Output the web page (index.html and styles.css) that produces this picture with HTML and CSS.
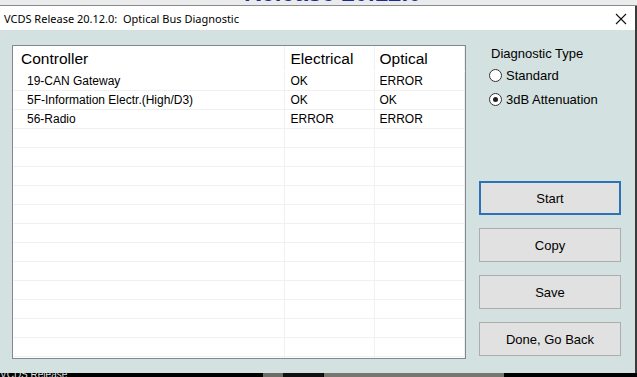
FILE: index.html
```html
<html>
  <head>
    <link rel="stylesheet" href="styles.css">
  </head>
  <body>
    <div class="backdrop-top">
      <div class="backdrop-title">Release 20.12.0</div>
    </div>

    <div class="screen">
      <div class="dialog">
        <div class="titlebar">
          <div class="title">VCDS Release 20.12.0:&nbsp; Optical Bus Diagnostic</div>
          <svg class="close" width="12" height="12" viewBox="0 0 12 12">
            <path d="M1 1 L11 11 M11 1 L1 11" stroke="#111" stroke-width="1.1" fill="none"/>
          </svg>
        </div>

        <div class="content">
          <div class="listbox">
            <table class="grid">
              <colgroup>
                <col class="w1"><col class="w2"><col class="w3"><col>
              </colgroup>
              <tr class="head">
                <td class="c1">Controller</td>
                <td class="c2">Electrical</td>
                <td class="c3">Optical</td>
                <td class="c4"></td>
              </tr>
              <tr><td class="c1">19-CAN Gateway</td><td class="c2">OK</td><td class="c3">ERROR</td><td class="c4"></td></tr>
              <tr><td class="c1">5F-Information Electr.(High/D3)</td><td class="c2">OK</td><td class="c3">OK</td><td class="c4"></td></tr>
              <tr><td class="c1">56-Radio</td><td class="c2">ERROR</td><td class="c3">ERROR</td><td class="c4"></td></tr>
              <tr><td class="c1"></td><td class="c2"></td><td class="c3"></td><td class="c4"></td></tr>
              <tr><td class="c1"></td><td class="c2"></td><td class="c3"></td><td class="c4"></td></tr>
              <tr><td class="c1"></td><td class="c2"></td><td class="c3"></td><td class="c4"></td></tr>
              <tr><td class="c1"></td><td class="c2"></td><td class="c3"></td><td class="c4"></td></tr>
              <tr><td class="c1"></td><td class="c2"></td><td class="c3"></td><td class="c4"></td></tr>
              <tr><td class="c1"></td><td class="c2"></td><td class="c3"></td><td class="c4"></td></tr>
              <tr><td class="c1"></td><td class="c2"></td><td class="c3"></td><td class="c4"></td></tr>
              <tr><td class="c1"></td><td class="c2"></td><td class="c3"></td><td class="c4"></td></tr>
              <tr><td class="c1"></td><td class="c2"></td><td class="c3"></td><td class="c4"></td></tr>
              <tr><td class="c1"></td><td class="c2"></td><td class="c3"></td><td class="c4"></td></tr>
              <tr><td class="c1"></td><td class="c2"></td><td class="c3"></td><td class="c4"></td></tr>
              <tr><td class="c1"></td><td class="c2"></td><td class="c3"></td><td class="c4"></td></tr>
              <tr><td class="c1"></td><td class="c2"></td><td class="c3"></td><td class="c4"></td></tr>
            </table>
          </div>

          <div class="side">
            <div class="group-label">Diagnostic Type</div>
            <div class="radio"><span class="dot"></span>Standard</div>
            <div class="radio"><span class="dot checked"></span>3dB Attenuation</div>

            <div class="buttons">
              <div class="btn default">Start</div>
              <div class="btn">Copy</div>
              <div class="btn">Save</div>
              <div class="btn">Done, Go Back</div>
            </div>
          </div>
        </div>
      </div>
      <div class="edge"></div>
    </div>

    <div class="taskbar">
      <span class="taskbar-text">VCDS Release</span>
      <span class="photo p1"></span>
      <span class="photo p2"></span>
      <span class="photo p3"></span>
    </div>
  </body>
</html>
```

FILE: styles.css
```css
body {
  margin: 0;
  width: 637px;
  height: 377px;
  overflow: hidden;
  font-family: "Liberation Sans", Arial, sans-serif;
  background: #1a1a1a;
}

.backdrop-top {
  height: 5px;
  background: #e9ebec;
  border-bottom: 1px solid #8a8a8a;
  overflow: hidden;
}

.backdrop-title {
  margin-top: -21px;
  margin-left: 244px;
  font-size: 24px;
  line-height: 28px;
  color: #1c2c8c;
  font-weight: bold;
}

.screen {
  display: flex;
  height: 367px;
}

.dialog {
  width: 635px;
  display: flex;
  flex-direction: column;
}

.edge {
  flex: 1;
  background: #3a3a3a;
}

.titlebar {
  height: 24px;
  background: #ffffff;
  display: flex;
  align-items: center;
  justify-content: space-between;
  padding: 0 8px 0 4px;
}

.title {
  font-family: "Noto Sans", sans-serif;
  font-size: 11px;
  color: #000;
}

.close {
  margin-top: 2px;
}

.content {
  flex: 1;
  background: #d4e1e1;
  display: flex;
  padding: 15px 0 0 12px;
}

.listbox {
  width: 452px;
  height: 312px;
  border: 1px solid #828790;
  background: #fff;
  overflow: hidden;
}

.grid {
  border-collapse: collapse;
  table-layout: fixed;
  width: 452px;
}

.w1 { width: 271px; }
.w2 { width: 90px; }
.w3 { width: 90px; }

.grid td {
  height: 19px;
  padding: 0;
  border-bottom: 1px solid #f0f0f0;
  border-right: 1px solid #f0f0f0;
  font-size: 12px;
  color: #000;
  white-space: nowrap;
  overflow: hidden;
  vertical-align: middle;
}

.grid .head td {
  height: 25px;
  font-size: 15.5px;
  padding-top: 1px;
  border-bottom: 1px solid #fff;
}

.grid .c1 { padding-left: 14px; }
.grid .c2 { padding-left: 6px; }
.grid .c3 { padding-left: 5px; }
.grid .c4 { border-right: none; }

.grid .head .c1 { padding-left: 8px; }
.grid .head .c2 { padding-left: 6px; }

.side {
  width: 142px;
  margin-left: 13px;
  display: flex;
  flex-direction: column;
}

.group-label {
  font-size: 13px;
  margin-left: 12px;
  margin-top: 1px;
  height: 15px;
}

.radio {
  display: flex;
  align-items: center;
  font-size: 13px;
  margin-left: 10px;
  height: 24px;
}

.radio:nth-of-type(2) {
  margin-top: 2px;
}

.dot {
  width: 11px;
  height: 11px;
  border: 1px solid #333;
  border-radius: 50%;
  background: #fff;
  margin-right: 4px;
  position: relative;
}

.dot.checked::after {
  content: "";
  position: absolute;
  left: 3px;
  top: 3px;
  width: 5px;
  height: 5px;
  border-radius: 50%;
  background: #222;
}

.buttons {
  margin-top: 70px;
  display: flex;
  flex-direction: column;
  gap: 13px;
}

.btn {
  height: 32px;
  border: 1px solid #adadad;
  background: #e1e1e1;
  display: flex;
  align-items: center;
  justify-content: center;
  font-size: 13px;
  color: #000;
}

.btn.default {
  border: 2px solid #2b73b8;
  height: 30px;
}

.taskbar {
  height: 5px;
  background: #000;
  display: flex;
  overflow: hidden;
}

.taskbar-text {
  color: #ddd;
  font-size: 10px;
  line-height: 8px;
  margin-top: -2px;
  width: 263px;
}

.photo { height: 5px; }
.p1 { width: 20px; background: #6d6d68; }
.p2 { width: 40px; background: #111; }
.p3 { width: 180px; background: #777770; margin-left: 1px; }
```
